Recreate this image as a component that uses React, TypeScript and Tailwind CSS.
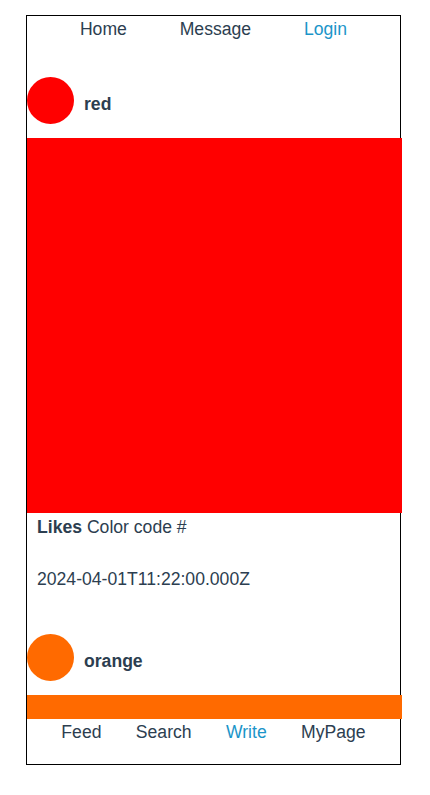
type Post = {
  name: string;
  color: string;
  likes: string;
  date: string;
};

const posts: Post[] = [
  { name: "red", color: "#ff0000", likes: "Color code #", date: "2024-04-01T11:22:00.000Z" },
  { name: "orange", color: "#ff6a00", likes: "Color code #", date: "2024-04-01T11:22:00.000Z" },
];

export default function App() {
  return (
    <div className="pt-[15px] pl-[26px] font-['Liberation_Sans',Arial,sans-serif] text-[17.6px] leading-[20px] text-[#2c3e50]">
      <div className="w-[375px] h-[750px] border border-black flex flex-col bg-white">
        {/* top nav */}
        <div className="h-[47px] shrink-0 pt-[3px] flex justify-evenly items-start">
          <span>Home</span>
          <span>Message</span>
          <span className="text-[#1b95c9]">Login</span>
        </div>

        {/* feed */}
        <div className="flex-1 overflow-hidden mr-[-2px]">
          {posts.map((post) => (
            <div key={post.name} className="pb-[31px]">
              <div className="h-[75px] flex items-center">
                <div
                  className="w-[47px] h-[47px] rounded-full"
                  style={{ backgroundColor: post.color }}
                />
                <span className="ml-[10px] mt-[6px] font-bold">{post.name}</span>
              </div>
              <div className="w-[375px] h-[375px]" style={{ backgroundColor: post.color }} />
              <p className="mt-[4px] pl-[10px]">
                <b>Likes</b> {post.likes}
              </p>
              <p className="mt-[32px] pl-[10px]">{post.date}</p>
            </div>
          ))}
        </div>

        {/* bottom nav */}
        <div className="h-[45px] shrink-0 pt-[3px] flex justify-evenly items-start bg-white">
          <span>Feed</span>
          <span>Search</span>
          <span className="text-[#1b95c9]">Write</span>
          <span>MyPage</span>
        </div>
      </div>
    </div>
  );
}
